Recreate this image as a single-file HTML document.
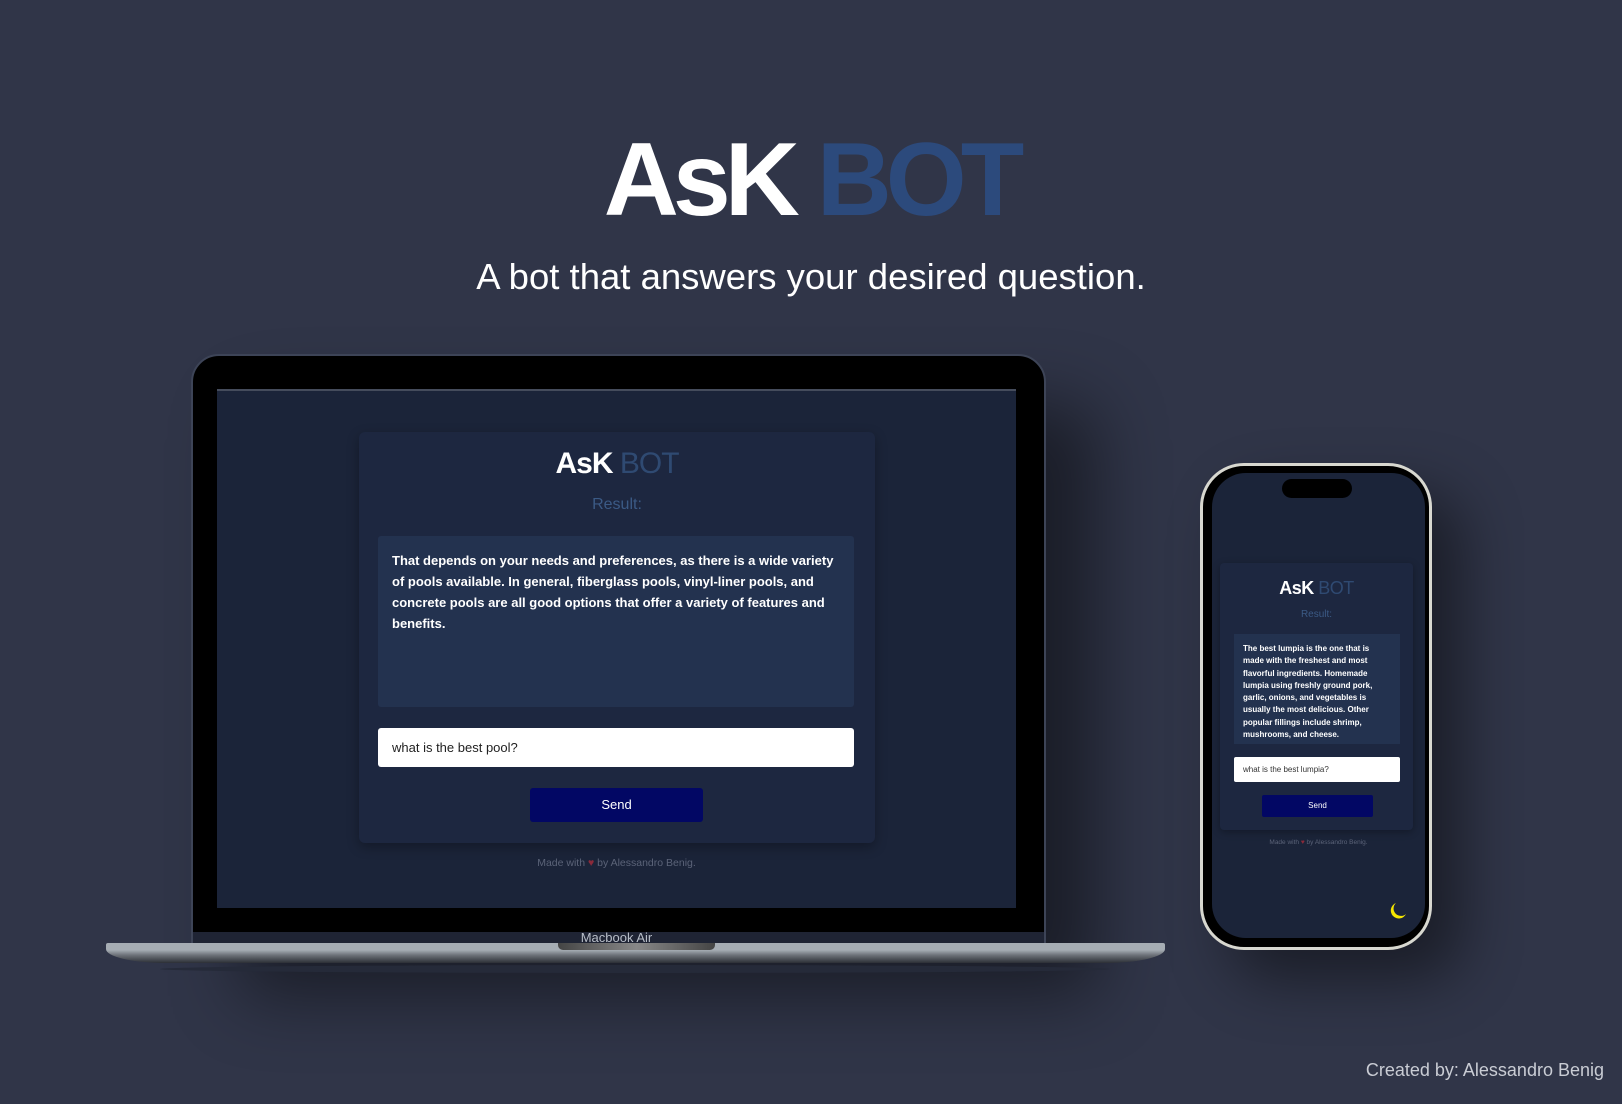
<!DOCTYPE html>
<html><head><style>
*{margin:0;padding:0;box-sizing:border-box}
body{width:1622px;height:1104px;background:#303548;position:relative;overflow:hidden;font-family:"Liberation Sans",sans-serif;color:#fff}
.a{position:absolute}
.t{left:0;width:1622px;text-align:center}
</style></head><body>
<div class="a t" style="top:124px;font-size:104px;font-weight:bold;letter-spacing:-6px;line-height:112px">AsK <span style="color:#2c4a7c">BOT</span></div>
<div class="a t" style="top:256px;font-size:36.5px;line-height:42px">A bot that answers your desired question.</div>

<!-- laptop lid -->
<div class="a" style="left:191px;top:354px;width:855px;height:592px;background:#000;border:2px solid #3d4457;border-radius:28px 28px 0 0;box-shadow:50px 50px 70px rgba(0,0,0,.45)"></div>
<div class="a" style="left:193px;top:932px;width:851px;height:12px;background:#1f2434"></div>
<div class="a" style="left:217px;top:389px;width:799px;height:519px;background:#1b2439;border-top:2px solid #454c5c"></div>
<!-- card -->
<div class="a" style="left:359px;top:432px;width:516px;height:411px;background:#1d2740;border-radius:6px;box-shadow:0 4px 12px rgba(0,0,0,.3)"></div>
<div class="a" style="left:359px;top:447px;width:516px;text-align:center;font-size:30px;font-weight:bold;letter-spacing:-1px">AsK <span style="color:#2f4a72;font-weight:normal">BOT</span></div>
<div class="a" style="left:359px;top:496px;width:516px;text-align:center;font-size:16px;color:#3b5a85">Result:</div>
<div class="a" style="left:378px;top:536px;width:476px;height:171px;background:#23324f;border-radius:3px;padding:14px 14px;font-size:13px;line-height:21px;font-weight:bold">That depends on your needs and preferences, as there is a wide variety of pools available. In general, fiberglass pools, vinyl-liner pools, and concrete pools are all good options that offer a variety of features and benefits.</div>
<div class="a" style="left:378px;top:728px;width:476px;height:39px;background:#fff;border-radius:3px;color:#222;font-size:13px;padding:12px 14px">what is the best pool?</div>
<div class="a" style="left:530px;top:788px;width:173px;height:34px;background:#020764;border-radius:3px;text-align:center;font-size:13px;line-height:34px">Send</div>
<div class="a" style="left:217px;top:857px;width:799px;text-align:center;font-size:10.5px;color:#5b6378">Made with <span style="color:#8b2a3a">&#9829;</span> by Alessandro Benig.</div>
<!-- base -->
<div class="a" style="left:106px;top:943px;width:1059px;height:20px;background:linear-gradient(#a6adb4 0,#a6adb4 35%,#6e737a 60%,#2c2f36 100%);border-radius:2px 2px 60px 60px/2px 2px 14px 14px"></div>
<div class="a" style="left:558px;top:943px;width:157px;height:7px;background:linear-gradient(90deg,#444,#888,#444);border-radius:0 0 5px 5px"></div>
<div class="a" style="left:160px;top:965px;width:950px;height:8px;background:#252a39;border-radius:50%"></div>
<div class="a" style="left:539px;top:930px;width:155px;text-align:center;font-size:13px;color:#b8bec8">Macbook Air</div>

<!-- phone -->
<div class="a" style="left:1200px;top:463px;width:232px;height:487px;border-radius:44px;background:#000;border:3px solid #d8d8d0;box-shadow:30px 30px 60px rgba(0,0,0,.45)"></div>
<div class="a" style="left:1212px;top:473px;width:213px;height:465px;border-radius:34px;background:#1b2439"></div>
<div class="a" style="left:1282px;top:479px;width:70px;height:19px;border-radius:10px;background:#000"></div>
<div class="a" style="left:1220px;top:563px;width:193px;height:267px;background:#1d2740;border-radius:4px;box-shadow:0 2px 8px rgba(0,0,0,.3)"></div>
<div class="a" style="left:1220px;top:578px;width:193px;text-align:center;font-size:18px;font-weight:bold;letter-spacing:-.5px">AsK <span style="color:#2f4a72;font-weight:normal">BOT</span></div>
<div class="a" style="left:1220px;top:609px;width:193px;text-align:center;font-size:10px;color:#3b5a85">Result:</div>
<div class="a" style="left:1234px;top:634px;width:166px;height:110px;background:#23324f;padding:9px 9px;font-size:8px;line-height:12.3px;font-weight:bold;overflow:hidden">The best lumpia is the one that is made with the freshest and most flavorful ingredients. Homemade lumpia using freshly ground pork, garlic, onions, and vegetables is usually the most delicious. Other popular fillings include shrimp, mushrooms, and cheese.</div>
<div class="a" style="left:1234px;top:757px;width:166px;height:25px;background:#fff;border-radius:2px;color:#333;font-size:8px;padding:8px 9px">what is the best lumpia?</div>
<div class="a" style="left:1262px;top:795px;width:111px;height:22px;background:#020764;border-radius:2px;text-align:center;font-size:8px;line-height:22px">Send</div>
<div class="a" style="left:1212px;top:839px;width:213px;text-align:center;font-size:6.5px;color:#5b6378">Made with <span style="color:#8b2a3a">&#9829;</span> by Alessandro Benig.</div>
<svg class="a" style="left:1388px;top:901px" width="20" height="20" viewBox="0 0 20 20"><path d="M8 2 A8 8 0 1 0 18 13 A7 7 0 0 1 8 2Z" fill="#f5e600"/></svg>

<div class="a" style="left:1300px;top:1060px;width:304px;text-align:right;font-size:18px;color:#c9ccd4">Created by: Alessandro Benig</div>
</body></html>
